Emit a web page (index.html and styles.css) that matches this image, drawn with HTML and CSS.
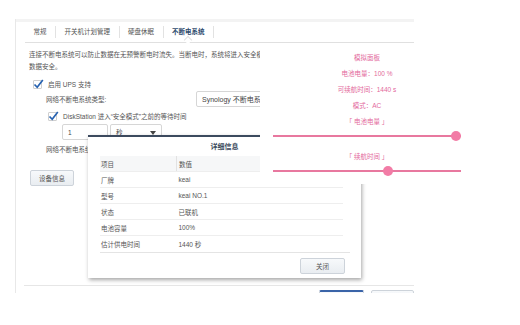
FILE: index.html
```html
<!DOCTYPE html>
<html lang="zh-CN">
<head>
    <meta charset="UTF-8">
    <title>不断电系统</title>
    <link rel="stylesheet" href="styles.css">
</head>
<body>

<div class="window">
    <div class="titlebar"></div>
    <div class="tabs">
        <span class="tab">常规</span>
        <span class="tab">开关机计划管理</span>
        <span class="tab">硬盘休眠</span>
        <span class="tab active">不断电系统</span>
    </div>

    <div class="content">
        <p class="desc">连接不断电系统可以防止数据在无预警断电时流失。当断电时，系统将进入安全模式以确保<br>数据安全。</p>

        <div class="row check-row">
            <span class="check">
                <svg width="11" height="10" viewBox="0 0 11 10"><path d="M1.5 5.5 L4.2 8.3 L9.8 1" fill="none" stroke="#2762b0" stroke-width="1.7"/></svg>
            </span>
            <span>启用 UPS 支持</span>
        </div>

        <div class="row indent">
            <span class="label">网络不断电系统类型:</span>
            <span class="field select wide">Synology 不断电系统服务器</span>
        </div>

        <div class="row check-row indent-2">
            <span class="check">
                <svg width="11" height="10" viewBox="0 0 11 10"><path d="M1.5 5.5 L4.2 8.3 L9.8 1" fill="none" stroke="#2762b0" stroke-width="1.7"/></svg>
            </span>
            <span>DiskStation 进入“安全模式”之前的等待时间</span>
        </div>

        <div class="row indent-3">
            <span class="field input">1</span>
            <span class="field select small">秒<i class="caret"></i></span>
        </div>

        <div class="row indent short">
            <span>网络不断电系统服务器</span>
        </div>

        <button class="btn">设备信息</button>
    </div>

    <div class="footer">
        <button class="btn primary"></button>
        <button class="btn"></button>
    </div>
</div>

<div class="modal">
    <div class="modal-head">详细信息</div>
    <table class="info">
        <tr><th>项目</th><th>数值</th></tr>
        <tr><td>厂牌</td><td>keai</td></tr>
        <tr><td>型号</td><td>keai NO.1</td></tr>
        <tr><td>状态</td><td>已联机</td></tr>
        <tr><td>电池容量</td><td>100%</td></tr>
        <tr><td>估计供电时间</td><td>1440 秒</td></tr>
    </table>
    <div class="modal-foot">
        <button class="btn">关闭</button>
    </div>
</div>

<div class="sim">
    <p>模拟面板</p>
    <p>电池电量：100 %</p>
    <p>可续航时间：1440 s</p>
    <p>模式：AC</p>
    <p>「 电池电量 」</p>
    <div class="slider"><span class="thumb" style="left: 100%"></span></div>
    <p class="gap">「 续航时间 」</p>
    <div class="slider"><span class="thumb" style="left: 64%"></span></div>
</div>

</body>
</html>
```

FILE: styles.css
```css
body {
    margin: 0;
    font-family: "Liberation Sans", "Noto Sans CJK SC", sans-serif;
    font-size: 6.5px;
    color: #555;
    background: #fff;
}
p {
    margin: 0;
}
.window {
    position: relative;
    margin: 19px 0 0 15px;
    width: 398px;
    height: 274px;
    border-left: 1px solid #e8e8e8;
    overflow: hidden;
    display: flex;
    flex-direction: column;
}
.titlebar {
    flex: none;
    height: 3px;
    background: #f3f3f3;
}
.tabs {
    flex: none;
    display: flex;
    align-items: center;
    height: 20px;
    margin-left: 9px;
    border-bottom: 1px solid #e0e0e0;
    position: relative;
}
.tab {
    padding: 0 8.5px;
    line-height: 12px;
    border-right: 1px solid #e2e2e2;
    color: #555;
}
.tab.active {
    color: #2d4a6d;
    font-weight: bold;
    position: relative;
}
.tab.active::after {
    content: "";
    position: absolute;
    left: 50%;
    bottom: -5px;
    width: 5px;
    height: 5px;
    margin-left: -3px;
    background: #fff;
    border-left: 1px solid #e0e0e0;
    border-top: 1px solid #e0e0e0;
    transform: rotate(45deg);
}
.content {
    flex: none;
    padding: 6px 0 0 13px;
    display: flex;
    flex-direction: column;
    align-items: flex-start;
}
.desc {
    line-height: 12px;
    white-space: nowrap;
}
.row {
    display: flex;
    align-items: center;
    white-space: nowrap;
}
.check-row {
    height: 14px;
    margin-top: 4px;
}
.check {
    position: relative;
    width: 7px;
    height: 7px;
    border: 1px solid #cfcfcf;
    border-radius: 1px;
    margin: 0 6px 0 4px;
}
.check svg {
    position: absolute;
    left: -1px;
    top: -2px;
}
.indent {
    margin-left: 17px;
    height: 16px;
}
.indent-2 {
    margin-left: 15px;
    margin-top: 2px;
}
.indent-3 {
    margin-left: 33px;
    margin-top: 1px;
    gap: 2px;
}
.short {
    margin-top: 3px;
    height: 12px;
}
.label {
    width: 150px;
}
.field {
    display: flex;
    align-items: center;
    height: 16px;
    box-sizing: border-box;
    border: 1px solid #d6d6d6;
    border-radius: 2px;
    padding: 0 5px;
    color: #444;
    background: #fff;
}
.wide {
    width: 130px;
    font-size: 7px;
}
.input {
    width: 46px;
}
.small {
    width: 52px;
    position: relative;
}
.caret {
    position: absolute;
    right: 5px;
    top: 6px;
    border-left: 3px solid transparent;
    border-right: 3px solid transparent;
    border-top: 4px solid #444;
}
.btn {
    font: inherit;
    color: #555;
    height: 16px;
    padding: 0 8px;
    border: 1px solid #cdd3da;
    border-radius: 2px;
    background: linear-gradient(#f7f9fb, #e9edf1);
    margin-top: 15px;
    margin-left: 1px;
}
.footer {
    flex: none;
    margin: auto 0 0 8px;
    height: 7px;
    border-top: 1px solid #e6e6e6;
    display: flex;
    justify-content: flex-end;
    gap: 7px;
    overflow: hidden;
}
.footer .btn {
    margin: 4px 0 0;
    width: 45px;
}
.footer .btn.primary {
    border-top: 2px solid #3a64a8;
    background: #f5f7fa;
}
.footer .btn + .btn {
    width: 43px;
}

.modal {
    position: absolute;
    left: 88px;
    top: 135px;
    width: 273px;
    height: 143px;
    box-sizing: border-box;
    background: #fff;
    border-top: 2px solid #3c4a5e;
    box-shadow: 1px 2px 4px rgba(0, 0, 0, 0.35);
    display: flex;
    flex-direction: column;
}
.modal-head {
    height: 19px;
    line-height: 19px;
    text-align: center;
    font-weight: bold;
    color: #3b4a5c;
    font-size: 7px;
}
.info {
    margin: 0 18px 0 12px;
    border-collapse: collapse;
    width: 243px;
}
.info th,
.info td {
    text-align: left;
    font-weight: normal;
    height: 15px;
    padding: 0 0 0 1px;
    border-bottom: 1px solid #eeeeee;
    color: #555;
}
.info th {
    background: #f6f7f8;
}
.info th:first-child {
    width: 75px;
    border-right: 1px solid #e2e2e2;
}
.info td:last-child,
.info th:last-child {
    padding-left: 2px;
}
.info tr:last-child td {
    border-bottom: none;
}
.modal-foot {
    margin: auto 11px 0 12px;
    border-top: 1px solid #e4e4e4;
    height: 25px;
    display: flex;
    justify-content: flex-end;
    align-items: flex-start;
}
.modal-foot .btn {
    margin: 5px 5px 0 0;
    width: 45px;
}

.sim {
    position: absolute;
    left: 260px;
    top: 45px;
    width: 214px;
    height: 139px;
    box-sizing: border-box;
    padding: 5px 13px 0;
    background: #fff;
    color: #e3699c;
    text-align: center;
}
.sim p {
    line-height: 16px;
}
.sim .gap {
    margin-top: 7px;
}
.slider {
    position: relative;
    height: 12px;
}
.slider::before {
    content: "";
    position: absolute;
    left: 0;
    right: 0;
    top: 5px;
    height: 2px;
    background: #e8789f;
}
.thumb {
    position: absolute;
    top: 1px;
    width: 10px;
    height: 10px;
    margin-left: -10px;
    border-radius: 50%;
    background: #f27ca6;
}
```
